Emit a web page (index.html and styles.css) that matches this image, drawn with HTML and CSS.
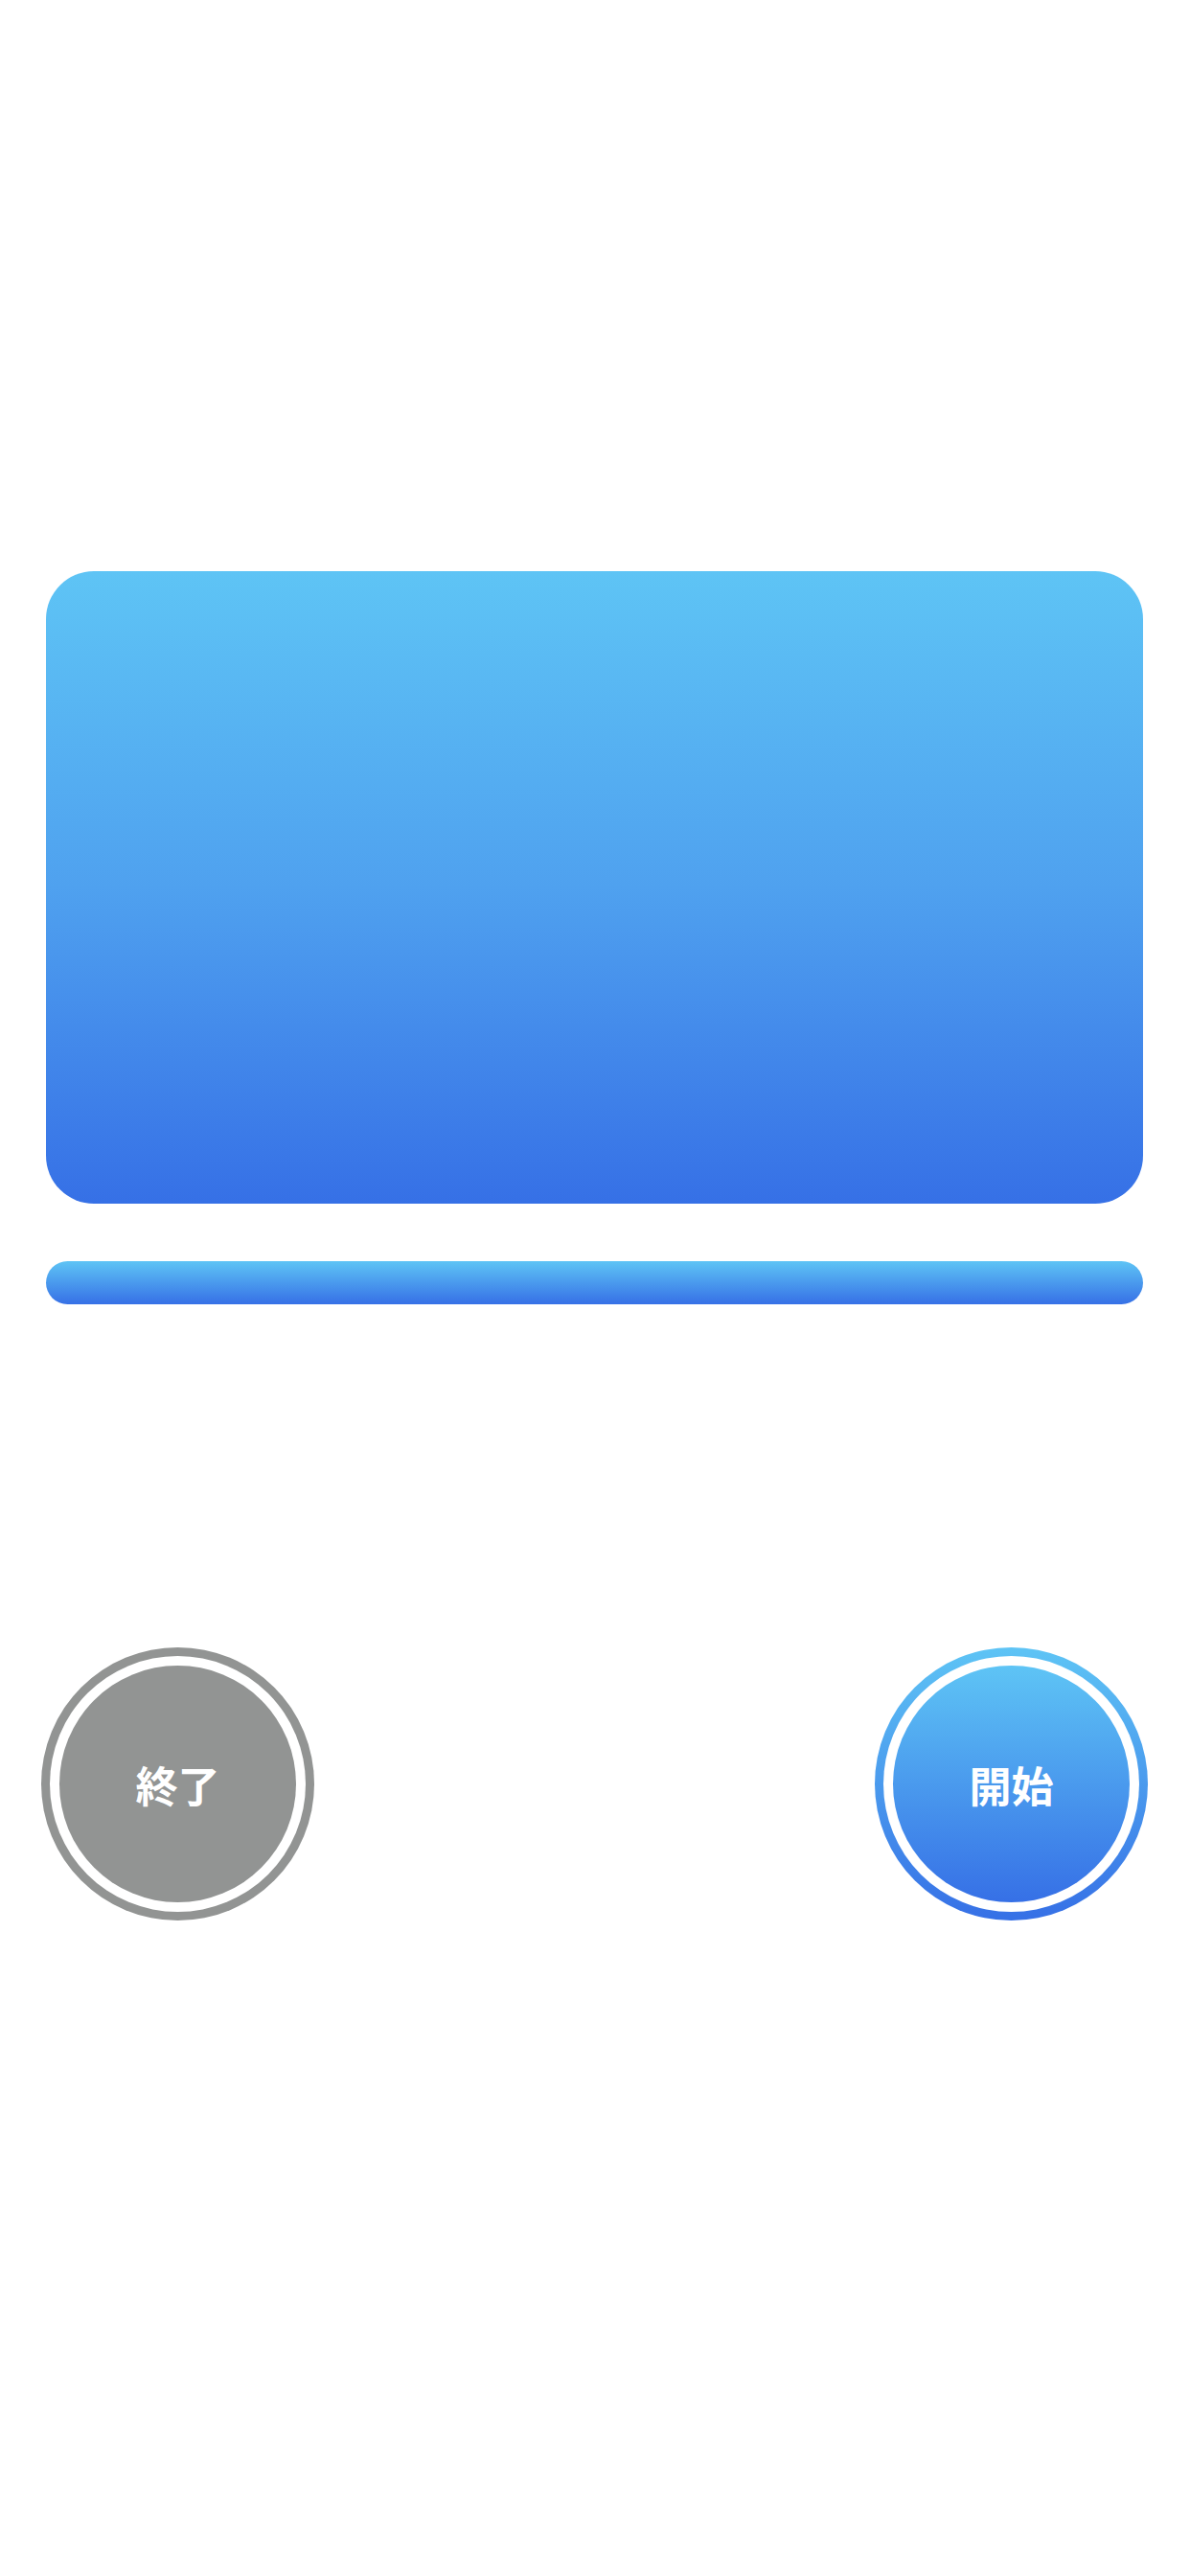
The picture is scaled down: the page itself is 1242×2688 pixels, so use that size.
FILE: index.html
```html
<!DOCTYPE html>
<html lang="ja">
<head>
<meta charset="utf-8">
<title>Timer</title>
<link rel="stylesheet" href="styles.css">
</head>
<body>
<main class="screen">
  <div class="display"></div>
  <div class="progress"></div>
  <div class="controls">
    <button class="ring ring-gray">
      <span class="gap"><span class="face face-gray">終了</span></span>
    </button>
    <button class="ring ring-blue">
      <span class="gap"><span class="face face-blue">開始</span></span>
    </button>
  </div>
</main>
</body>
</html>
```

FILE: styles.css
```css
html, body {
  margin: 0;
  padding: 0;
  background: #ffffff;
}
.screen {
  width: 1242px;
  height: 2688px;
  box-sizing: border-box;
  padding-top: 596px;
  display: flex;
  flex-direction: column;
  align-items: flex-start;
}
.display {
  margin-left: 48px;
  width: 1145px;
  height: 660px;
  border-radius: 50px;
  background: linear-gradient(180deg, #5ec4f5 0%, #4fa1ef 50%, #3670e6 100%);
}
.progress {
  margin-left: 48px;
  margin-top: 60px;
  width: 1145px;
  height: 45px;
  border-radius: 23px;
  background: linear-gradient(180deg, #5ec4f5 0%, #3670e6 100%);
}
.controls {
  margin-top: 358px;
  width: 100%;
  box-sizing: border-box;
  padding: 0 44px 0 43px;
  display: flex;
  justify-content: space-between;
}
.ring {
  width: 285px;
  height: 285px;
  border: none;
  border-radius: 50%;
  padding: 9px;
  margin: 0;
  box-sizing: border-box;
  display: flex;
  cursor: pointer;
}
.ring-gray {
  background: #929493;
}
.ring-blue {
  background: linear-gradient(180deg, #5ec4f5 0%, #3670e6 100%);
}
.gap {
  flex: 1;
  border-radius: 50%;
  background: #ffffff;
  padding: 10px;
  display: flex;
}
.face {
  flex: 1;
  border-radius: 50%;
  display: flex;
  align-items: center;
  justify-content: center;
  color: #ffffff;
  font-family: "Noto Sans CJK JP", "Noto Sans", sans-serif;
  font-size: 44px;
  font-weight: 700;
  letter-spacing: 0;
}
.face-gray {
  background: #929493;
}
.face-blue {
  background: linear-gradient(180deg, #5ec4f5 0%, #3670e6 100%);
}
```
